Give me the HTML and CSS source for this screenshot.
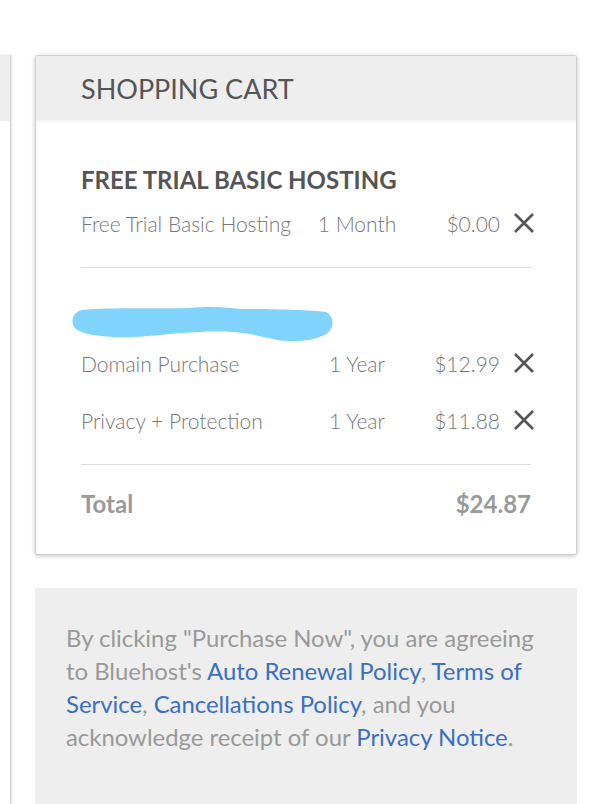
FILE: index.html
```html
<!DOCTYPE html>
<html lang="en">
<head>
    <meta charset="UTF-8">
    <meta name="viewport" content="width=device-width, initial-scale=1.0">
    <title>Shopping Cart</title>
    <link rel="stylesheet" href="styles.css">
</head>
<body>
    <div class="page">
        <div class="side-panel">
            <div class="side-top"></div>
        </div>

        <div class="main-col">
            <div class="cart">
                <div class="cart-header">SHOPPING CART</div>

                <div class="cart-body">
                    <div class="cart-section">
                        <h3 class="section-title">FREE TRIAL BASIC HOSTING</h3>
                        <div class="cart-row">
                            <span class="item-name">Free Trial Basic Hosting</span>
                            <span class="item-term">1 Month</span>
                            <span class="item-price">$0.00</span>
                            <button class="remove" aria-label="Remove">
                                <svg viewBox="0 0 22 22" width="22" height="22"><path d="M2 2 L20 20 M20 2 L2 20" stroke="#555" stroke-width="2.6" fill="none"/></svg>
                            </button>
                        </div>
                    </div>

                    <div class="cart-section">
                        <h3 class="section-title redacted">
                            <svg class="scribble" viewBox="0 0 262 38" width="262" height="38">
                                <path d="M10 5 C40 2 90 4 118 3 C138 1 152 2 170 4 C200 4 238 5 254 7 C262 11 262 21 257 27 C248 34 232 37 214 36 C196 34 184 29 162 27 C142 26 128 27 110 28 C92 29 70 33 42 32 C22 31 6 28 2 22 C-2 14 2 7 10 5 Z" fill="#80d3fc"/>
                            </svg>
                        </h3>
                        <div class="cart-row">
                            <span class="item-name">Domain Purchase</span>
                            <span class="item-term">1 Year</span>
                            <span class="item-price">$12.99</span>
                            <button class="remove" aria-label="Remove">
                                <svg viewBox="0 0 22 22" width="22" height="22"><path d="M2 2 L20 20 M20 2 L2 20" stroke="#555" stroke-width="2.6" fill="none"/></svg>
                            </button>
                        </div>
                        <div class="cart-row">
                            <span class="item-name">Privacy + Protection</span>
                            <span class="item-term">1 Year</span>
                            <span class="item-price">$11.88</span>
                            <button class="remove" aria-label="Remove">
                                <svg viewBox="0 0 22 22" width="22" height="22"><path d="M2 2 L20 20 M20 2 L2 20" stroke="#555" stroke-width="2.6" fill="none"/></svg>
                            </button>
                        </div>
                    </div>

                    <div class="cart-total">
                        <span>Total</span>
                        <span>$24.87</span>
                    </div>
                </div>
            </div>

            <div class="notice">
                <p>By clicking "Purchase Now", you are agreeing to Bluehost's <a href="#">Auto Renewal Policy</a>, <a href="#">Terms of Service</a>, <a href="#">Cancellations Policy</a>, and you acknowledge receipt of our <a href="#">Privacy Notice</a>.</p>
            </div>
        </div>
    </div>
</body>
</html>
```

FILE: styles.css
```css
body {
    margin: 0;
    background-color: #fff;
    font-family: Lato, "Open Sans", sans-serif;
    color: #555;
}

.page {
    display: flex;
    gap: 24px;
    padding-top: 55px;
    height: 749px;
    overflow: hidden;
}

.side-panel {
    width: 10px;
    flex-shrink: 0;
    background-color: #fff;
    border-right: 1px solid #d4d4d4;
    box-shadow: 1px 0 2px rgba(0, 0, 0, 0.12);
}

.side-top {
    height: 66px;
    background-color: #eee;
}

.main-col {
    width: 542px;
    display: flex;
    flex-direction: column;
    gap: 33px;
}

.cart {
    background-color: #fff;
    border: 1px solid #d0d0d0;
    border-radius: 3px;
    box-shadow: 0 1px 4px rgba(0, 0, 0, 0.25);
    overflow: hidden;
}

.cart-header {
    height: 64px;
    background-color: #eee;
    border-bottom: 2px solid #f6f6f6;
    padding-left: 45px;
    font-size: 27px;
    line-height: 66px;
    color: #555;
}

.cart-body {
    padding: 40px 45px 30px;
}

.cart-section {
    padding-bottom: 24px;
    border-bottom: 1px solid #ddd;
}

.cart-section + .cart-section {
    padding-top: 34px;
}

.section-title {
    margin: 0 0 5px;
    height: 36px;
    font-size: 24px;
    line-height: 36px;
    font-weight: 700;
    color: #555;
}

.section-title.redacted {
    position: relative;
}

.scribble {
    position: absolute;
    left: -9px;
    top: 3px;
}

.cart-row {
    display: grid;
    grid-template-columns: 226px 100px 93px 31px;
    align-items: center;
    height: 40px;
    font-size: 21px;
    font-weight: 300;
    color: #777;
}

.cart-row + .cart-row {
    margin-top: 17px;
}

.item-term {
    text-align: center;
}

.item-price {
    text-align: right;
}

.remove {
    border: none;
    background: none;
    padding: 0;
    margin-left: 13px;
    width: 22px;
    height: 22px;
    cursor: pointer;
}

.remove svg {
    display: block;
}

.cart-total {
    display: flex;
    justify-content: space-between;
    margin-top: 19px;
    line-height: 40px;
    font-size: 24px;
    font-weight: 700;
    color: #999;
}

.notice {
    flex: 1;
    background-color: #eee;
    padding: 33px 30px 0 31px;
}

.notice p {
    margin: 0;
    font-size: 23.9px;
    line-height: 33px;
    color: #999;
}

.notice a {
    color: #3a6fc1;
    text-decoration: none;
}
```
